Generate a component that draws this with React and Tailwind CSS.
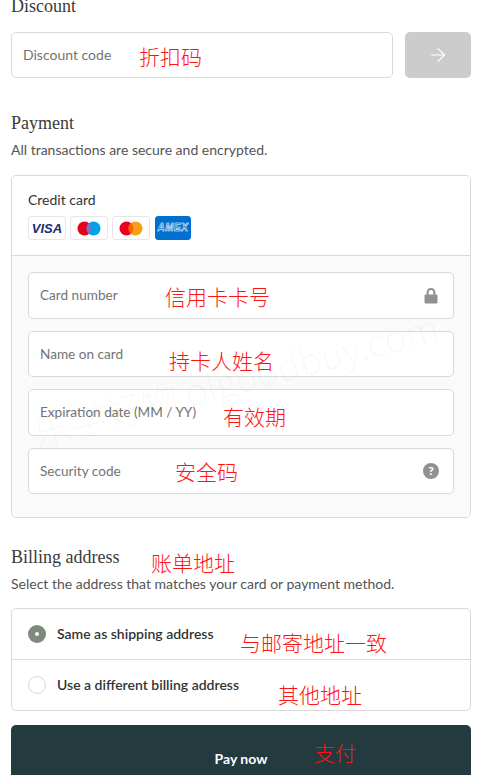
import React from "react";
import { ArrowRight } from "lucide-react";

const sans = "font-['Lato','Liberation_Sans',sans-serif]";
const serif = "font-['Liberation_Serif',serif]";

function Note({ className, children }) {
  return (
    <span className={`absolute whitespace-nowrap text-[21px] font-light leading-[28px] text-[#ff1414] font-['Noto_Sans_CJK_SC',sans-serif] ${className}`}>
      {children}
    </span>
  );
}

function Field({ label, h, children }) {
  return (
    <div className={`${h} flex items-center justify-between rounded-[5px] border border-[#d9d9d9] bg-white pl-[11px] pr-[13px]`}>
      <span className="text-[13.6px] text-[#737373]">{label}</span>
      {children}
    </div>
  );
}

function Lock() {
  return (
    <svg width="16" height="18" viewBox="0 0 16 18" className="relative -left-px text-[#919191]">
      <path fill="currentColor" d="M8 1C5.200 1 3.600 3 3.600 5.600V7.500H2.400c-.5 0-.9.4-.9.9v7.200c0 .5.4.9.9.9h11.200c.5 0 .9-.4.9-.9V8.400c0-.5-.4-.9-.9-.9h-1.200V5.600C12.400 3 10.800 1 8 1Zm0 2c1.500 0 2.300 1.100 2.300 2.700v1.800H5.700V5.700C5.700 4.100 6.500 3 8 3Z" />
    </svg>
  );
}

function Help() {
  return (
    <span className="relative -left-px flex size-4 items-center justify-center rounded-full bg-[#919191] text-[12px] font-black leading-none text-white">?</span>
  );
}

function Badge({ children, className = "w-[38px] border-[#e6e6e6] bg-white" }) {
  return <div className={`flex h-6 items-center justify-center rounded-[3px] border ${className}`}>{children}</div>;
}

function Circles({ a, b, mid }) {
  return (
    <svg width="24" height="15" viewBox="0 0 24 15">
      <circle cx="7.500" cy="7.500" r="7" fill={a} />
      <circle cx="16.500" cy="7.500" r="7" fill={b} />
      <path d="M12 2.100a7 7 0 0 1 0 10.800a7 7 0 0 1 0-10.800Z" fill={mid} />
    </svg>
  );
}

export default function App() {
  return (
    <div className={`relative h-[775px] w-[481px] overflow-hidden bg-white pl-[11px] pr-[10px] ${sans}`}>
      <h2 className={`-mt-[4px] text-[18px] leading-[20px] text-[#3a3a3a] ${serif}`}>Discount</h2>

      <div className="mt-[16px] flex gap-3">
        <div className="flex h-[46px] flex-1 items-center rounded-[5px] border border-[#d9d9d9] pl-[11px]">
          <span className="relative -top-px text-[14px] text-[#737373]">Discount code</span>
        </div>
        <div className="flex h-[46px] w-[66px] items-center justify-center rounded-[5px] bg-[#cccccc]">
          <ArrowRight size={22} strokeWidth={1.300} color="#fff" />
        </div>
      </div>

      <h2 className={`mt-[35px] text-[18px] leading-[20px] text-[#3a3a3a] ${serif}`}>Payment</h2>
      <p className="mt-[8px] text-[14px] leading-[17px] text-[#545454]">All transactions are secure and encrypted.</p>

      <section className="mt-[17px] overflow-hidden rounded-[5px] border border-[#d9d9d9]">
        <div className="h-[80px] border-b border-[#d9d9d9] bg-white pl-4 pt-[15px]">
          <div className="text-[14px] leading-[17px] text-[#333]">Credit card</div>
          <div className="mt-[8px] flex gap-1">
            <Badge>
              <span className="text-[13px] font-black italic leading-none text-[#1a2a78] font-['Liberation_Sans',sans-serif]">VISA</span>
            </Badge>
            <Badge><Circles a="#eb001b" b="#00a2e5" mid="#7375cf" /></Badge>
            <Badge><Circles a="#eb001b" b="#f79e1b" mid="#ff5f00" /></Badge>
            <Badge className="ml-[1px] w-[36px] border-[#006fcf] bg-[#006fcf]">
              <span className="text-[10px] font-black italic leading-none tracking-[0.5px] text-[#006fcf] [-webkit-text-stroke:0.5px_white] font-['Liberation_Sans',sans-serif]">AMEX</span>
            </Badge>
          </div>
        </div>
        <div className="flex h-[261px] flex-col gap-3 bg-[#fafafa] px-4 pt-4">
          <Field label="Card number" h="h-[47px]"><Lock /></Field>
          <Field label="Name on card" h="h-[46px]" />
          <Field label="Expiration date (MM / YY)" h="h-[47px]" />
          <Field label="Security code" h="h-[46px]"><Help /></Field>
        </div>
      </section>

      <h2 className={`mt-[29px] text-[18px] leading-[20px] text-[#3a3a3a] ${serif}`}>Billing address</h2>
      <p className="mt-[8px] text-[14px] leading-[17px] text-[#545454]">Select the address that matches your card or payment method.</p>

      <div className="mt-[16px] h-[103px] rounded-[5px] border border-[#d9d9d9]">
        <div className="flex h-[51px] items-center gap-[11px] border-b border-[#d9d9d9] pl-4">
          <span className="flex size-[18px] items-center justify-center rounded-full bg-[#7e8a7b]">
            <span className="size-1 rounded-full bg-white" />
          </span>
          <span className="relative -top-px text-[14px] font-semibold text-[#333]">Same as shipping address</span>
        </div>
        <div className="flex h-[50px] items-center gap-[11px] pl-4">
          <span className="size-[18px] rounded-full border border-[#d9d9d9] bg-white" />
          <span className="relative -top-px text-[14px] font-semibold text-[#333]">Use a different billing address</span>
        </div>
      </div>

      <div className="mt-[14px] flex h-[66px] items-center justify-center rounded-[5px] bg-[#233a3e]">
        <span className="text-[14px] font-bold text-white">Pay now</span>
      </div>

      <svg className="pointer-events-none absolute left-0 top-0" width="481" height="775" aria-hidden="true">
        <text x="38" y="448" transform="rotate(-15 38 448)" fontSize="37" fontWeight="300" fill="#000" fillOpacity="0.03" fontFamily="'Noto Sans CJK SC', sans-serif">乐学好物 olgoodbuy.com</text>
      </svg>

      <Note className="left-[139px] top-[42px]">折扣码</Note>
      <Note className="left-[165px] top-[282px]">信用卡卡号</Note>
      <Note className="left-[169px] top-[346px]">持卡人姓名</Note>
      <Note className="left-[223px] top-[402px]">有效期</Note>
      <Note className="left-[175px] top-[457px]">安全码</Note>
      <Note className="left-[151px] top-[548px]">账单地址</Note>
      <Note className="left-[240px] top-[628px]">与邮寄地址一致</Note>
      <Note className="left-[278px] top-[680px]">其他地址</Note>
      <Note className="left-[314px] top-[738px]">支付</Note>
    </div>
  );
}
